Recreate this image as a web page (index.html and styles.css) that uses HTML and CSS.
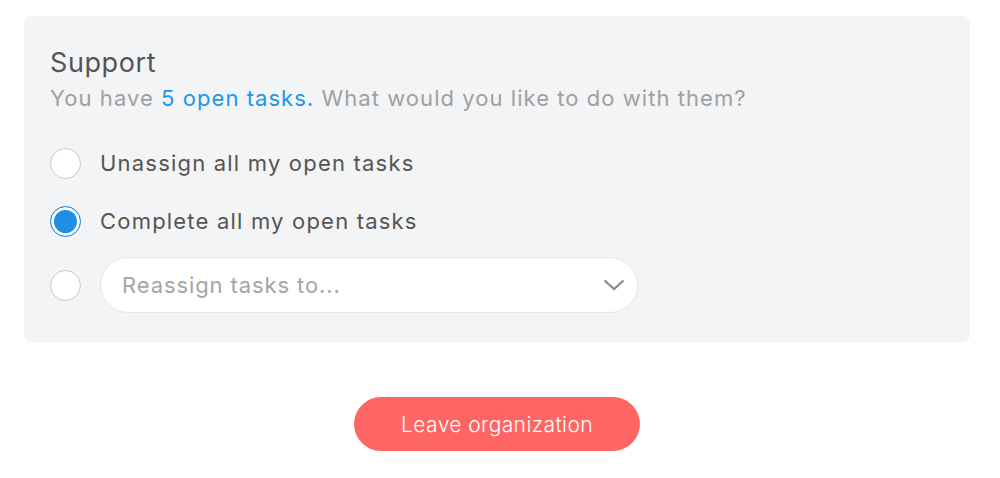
FILE: index.html
```html
<!DOCTYPE html>
<html>
    <head>
        <title>Leave organization</title>
        <link rel="stylesheet" href="styles.css">
    </head>
    <body>
        <div class="panel">
            <h2 class="title">Support</h2>
            <p class="subtitle">You have <span class="count">5 open tasks.</span> What would you like to do with them?</p>

            <div class="option">
                <span class="radio"></span>
                <span class="label">Unassign all my open tasks</span>
            </div>
            <div class="option">
                <span class="radio checked"></span>
                <span class="label">Complete all my open tasks</span>
            </div>
            <div class="option">
                <span class="radio"></span>
                <div class="select">
                    <span class="placeholder">Reassign tasks to...</span>
                    <svg class="chevron" width="22" height="12" viewBox="0 0 22 12">
                        <path d="M1.5 1.5 L11 10 L20.5 1.5" fill="none" stroke="#8a8a8a" stroke-width="2.2"/>
                    </svg>
                </div>
            </div>
        </div>

        <div class="actions">
            <button class="leave">Leave organization</button>
        </div>
    </body>
</html>
```

FILE: styles.css
```css
body {
margin: 0;
background: white;
font-family: Inter, "Noto Sans", sans-serif;
color: #555;
}

.panel {
margin: 16px 30px 0 24px;
background: #f3f4f6;
border-radius: 8px;
padding: 30px 27px 28px 26px;
height: 268px;
}

.title {
margin: 0;
font-size: 27px;
font-weight: 400;
color: #555;
line-height: 34px;
letter-spacing: 0.6px;
}

.subtitle {
margin: 0 0 18px 0;
font-size: 22px;
color: #a0a0a0;
line-height: 36px;
letter-spacing: 1.05px;
}

.count {
color: #2196e8;
}

.option {
display: flex;
align-items: center;
gap: 19px;
height: 58px;
}

.option:last-child {
height: 60px;
margin-top: 5px;
}

.radio {
width: 29px;
height: 29px;
border: 1.5px solid #c8c8c8;
border-radius: 50%;
background: white;
box-sizing: content-box;
flex-shrink: 0;
}

.radio.checked {
border-color: #1e8fe6;
background: #1e8fe6;
box-shadow: inset 0 0 0 3px white;
}

.label {
font-size: 22px;
color: #555;
letter-spacing: 1.2px;
}

.select {
width: 538px;
height: 56px;
box-sizing: border-box;
background: white;
border: 1px solid #e6e6e6;
border-radius: 28px;
display: flex;
align-items: center;
justify-content: space-between;
padding: 0 12px 0 21px;
}

.placeholder {
font-size: 22px;
color: #a5a5a5;
letter-spacing: 0.9px;
}

.actions {
display: flex;
justify-content: center;
padding: 55px 0 0 0;
}

.leave {
width: 286px;
height: 54px;
border: none;
border-radius: 27px;
background: #ff6663;
color: white;
font-family: Inter, "Noto Sans", sans-serif;
font-size: 21px;
font-weight: 300;
letter-spacing: 0.4px;
margin-right: 6px;
}
```
